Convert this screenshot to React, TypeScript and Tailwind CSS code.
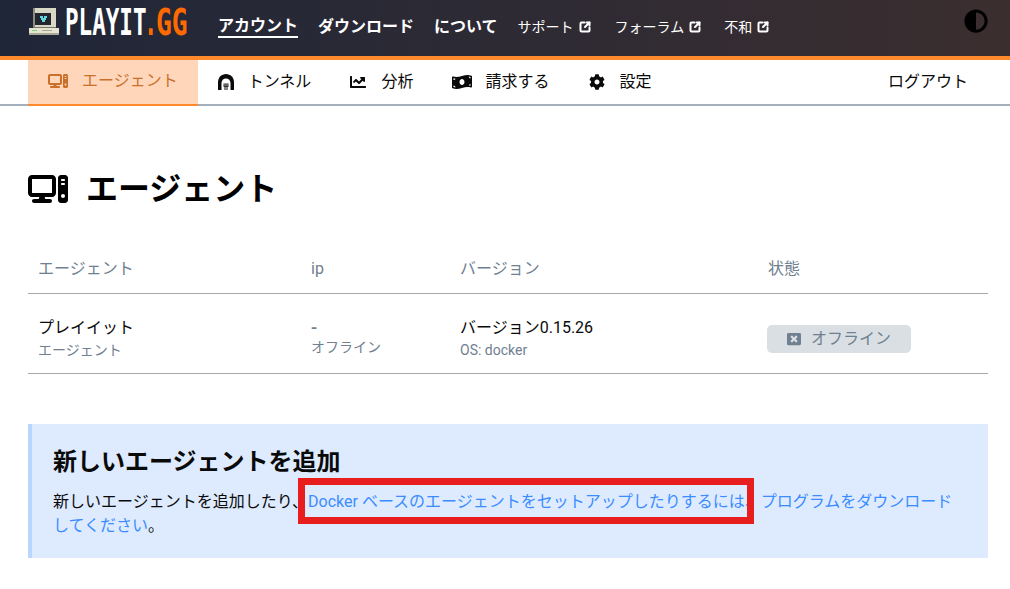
import { FC, ReactNode } from 'react';
import { FaChartLine, FaCog, FaMoneyBillWave, FaAdjust, FaWindowClose } from 'react-icons/fa';
import { FaComputer } from 'react-icons/fa6';
import { LuSquareArrowOutUpRight } from 'react-icons/lu';

const Logo: FC = () => (
  <div className="flex items-center gap-[6px] h-[27px] mb-[9px]">
    <svg width="30" height="27" viewBox="0 0 30 27" shapeRendering="crispEdges">
      <rect x="4" y="0" width="23" height="20" fill="#d8d8c4" />
      <rect x="4" y="0" width="2" height="20" fill="#8d8d80" />
      <rect x="6" y="5" width="16" height="12" fill="#23262e" />
      <rect x="11" y="8" width="3" height="2" fill="#5fd6e0" />
      <rect x="15" y="8" width="3" height="2" fill="#5fd6e0" />
      <rect x="12" y="10" width="5" height="2" fill="#5fd6e0" />
      <rect x="13" y="12" width="3" height="2" fill="#5fd6e0" />
      <rect x="4" y="19" width="23" height="2" fill="#77776c" />
      <rect x="0" y="20" width="30" height="7" fill="#e4e4d0" />
      <rect x="0" y="25" width="30" height="2" fill="#a8a898" />
      <rect x="3" y="22" width="5" height="1" fill="#7fd07f" />
      <rect x="13" y="22" width="10" height="1" fill="#a8a898" />
    </svg>
    <div className="flex w-[123px] h-[27px] pt-[1px] leading-[27px] font-['DejaVu_Sans_Mono',monospace] text-[37px] font-bold whitespace-nowrap">
      <span className="w-[84px] origin-left scale-x-[0.61] text-white">PLAYIT</span>
      <span className="w-[7px] -ml-[5px] mr-[5px] origin-left scale-x-[0.6] text-[#ff6a00]">.</span>
      <span className="w-[32px] origin-left scale-x-[0.71] text-[#ff6a00]">GG</span>
    </div>
  </div>
);

const TopLink: FC<{ label: string; active?: boolean }> = ({ label, active }) => (
  <a
    className={
      active
        ? 'text-base font-bold text-white border-b-2 border-white leading-[20px] mt-[2px]'
        : 'text-base font-bold text-white leading-[21px] mt-[1px]'
    }
  >
    {label}
  </a>
);

const ExternalLink: FC<{ label: string }> = ({ label }) => (
  <a className="flex items-center gap-[5px] mt-[2px] text-sm text-white">
    {label}
    <LuSquareArrowOutUpRight className="w-[12px] h-[12px] stroke-[4px]" />
  </a>
);

const TunnelIcon: FC = () => (
  <svg width="16" height="16" viewBox="0 0 16 16">
    <path d="M8 0C3.6 0 0 3.6 0 8v8h16V8c0-4.4-3.6-8-8-8z" fill="currentColor" />
    <path d="M8 4.5c-2.6 0-4.5 2-4.5 4.5v7h9V9c0-2.5-1.900-4.500-4.500-4.500z" fill="#fff" />
    <path d="M5.500 9.500h5V13h-5z" fill="currentColor" opacity="0.85" />
    <path d="M6.500 13h1v3h-1zM8.500 13h1v3h-1z" fill="currentColor" />
    <path d="M6.500 10.500h1v1h-1zM8.500 10.500h1v1h-1z" fill="#fff" />
  </svg>
);

const Tab: FC<{ icon: ReactNode; label: string; active?: boolean }> = ({ icon, label, active }) => (
  <a
    className={
      active
        ? 'flex items-center gap-[14px] h-[46px] -mb-[2px] px-[20px] pb-[2px] bg-[#ffd6ba] border-b-2 border-[#ff8a2b] text-[#c9712b]'
        : 'flex items-center gap-[14px] h-[44px] px-[20px] text-[#0a0a0a]'
    }
  >
    {icon}
    <span className="text-base leading-none">{label}</span>
  </a>
);

const App: FC = () => {
  return (
    <div className="min-h-[589px] bg-white text-[#0a0a0a] font-['Roboto','Noto_Sans_CJK_JP',sans-serif]">
      <header className="flex items-center h-[60px] pl-[29px] pr-[22px] pb-[4px] border-b-4 border-[#ff8a2b] bg-gradient-to-r from-[#1f2638] to-[#3b2e2f]">
        <Logo />
        <nav className="flex items-center ml-[30px] gap-[20px]">
          <TopLink label="アカウント" active />
          <TopLink label="ダウンロード" />
          <TopLink label="について" />
          <ExternalLink label="サポート" />
          <div className="ml-[4px]">
            <ExternalLink label="フォーラム" />
          </div>
          <div className="ml-[3px]">
            <ExternalLink label="不和" />
          </div>
        </nav>
        <FaAdjust className="ml-auto w-[24px] h-[24px] -mt-[10px] text-black" />
      </header>

      <div className="flex items-center h-[46px] pl-[28px] pr-[22px] border-b-2 border-[#a3afba]">
        <Tab active icon={<FaComputer className="w-[20px] h-[16px]" />} label="エージェント" />
        <Tab icon={<TunnelIcon />} label="トンネル" />
        <Tab icon={<FaChartLine className="w-[16px] h-[16px] -ml-[1px] mr-[1px]" />} label="分析" />
        <Tab icon={<FaMoneyBillWave className="w-[20px] h-[16px] -ml-[1px] -mr-[1px]" />} label="請求する" />
        <Tab icon={<FaCog className="w-[16px] h-[16px]" />} label="設定" />
        <a className="ml-auto pr-[20px] text-base">ログアウト</a>
      </div>

      <main className="pl-[28px] pr-[22px] pt-[62px]">
        <h1 className="flex items-center gap-[18px] h-[42px] text-[32px] font-bold leading-none text-black">
          <FaComputer className="w-[40px] h-[32px]" />
          エージェント
        </h1>

        <table className="w-full mt-[36px] table-fixed border-collapse">
          <thead>
            <tr className="border-b border-[#a9a9a9] text-left text-[#708090]">
              <th className="w-[273px] h-[47px] px-[10px] text-base font-normal">エージェント</th>
              <th className="w-[149px] px-[10px] text-base font-normal">ip</th>
              <th className="w-[308px] px-[10px] text-base font-normal">バージョン</th>
              <th className="px-[10px] text-base font-normal">状態</th>
            </tr>
          </thead>
          <tbody>
            <tr className="border-b border-[#a9a9a9]">
              <td className="h-[80px] px-[10px] pt-[22px] align-top">
                <div className="text-base leading-[24px]">プレイイット</div>
                <div className="text-sm leading-[21px] text-[#708090]">エージェント</div>
              </td>
              <td className="px-[10px] pt-[22px] align-top">
                <div className="text-lg font-medium leading-[24px] text-[#708090]">-</div>
                <div className="text-sm leading-[14px] text-[#708090]">オフライン</div>
              </td>
              <td className="px-[10px] pt-[22px] align-top">
                <div className="text-base leading-[24px]">バージョン0.15.26</div>
                <div className="text-sm leading-[21px] text-[#708090]">OS: docker</div>
              </td>
              <td className="px-[10px] pt-[31px] align-top">
                <span className="inline-flex items-center gap-[10px] w-[144px] h-[28px] -ml-[1px] px-[20px] rounded-[5px] bg-[#dadfe3] text-base text-[#708090]">
                  <FaWindowClose className="w-[14px] h-[14px] shrink-0" />
                  オフライン
                </span>
              </td>
            </tr>
          </tbody>
        </table>

        <section className="mt-[50px] h-[134px] pl-[21px] pr-[25px] pt-[20px] border-l-4 border-[#b8d6ff] bg-[#deebff]">
          <h2 className="text-2xl font-bold leading-[36px] text-[#0a0a0a]">新しいエージェントを追加</h2>
          <p className="mt-[10px] text-base leading-[24px]">
            新しいエージェントを追加したり、
            <a className="relative text-[#3b8cff]">
              Docker ベースのエージェントをセットアップしたりするには、
              <span className="absolute left-[-10px] right-[7px] top-[-14px] bottom-[-13px] border-[7px] border-[#e81e1e]" />
            </a>
            <a className="text-[#3b8cff]">プログラムをダウンロードしてください</a>。
          </p>
        </section>
      </main>
    </div>
  );
};

export default App;
